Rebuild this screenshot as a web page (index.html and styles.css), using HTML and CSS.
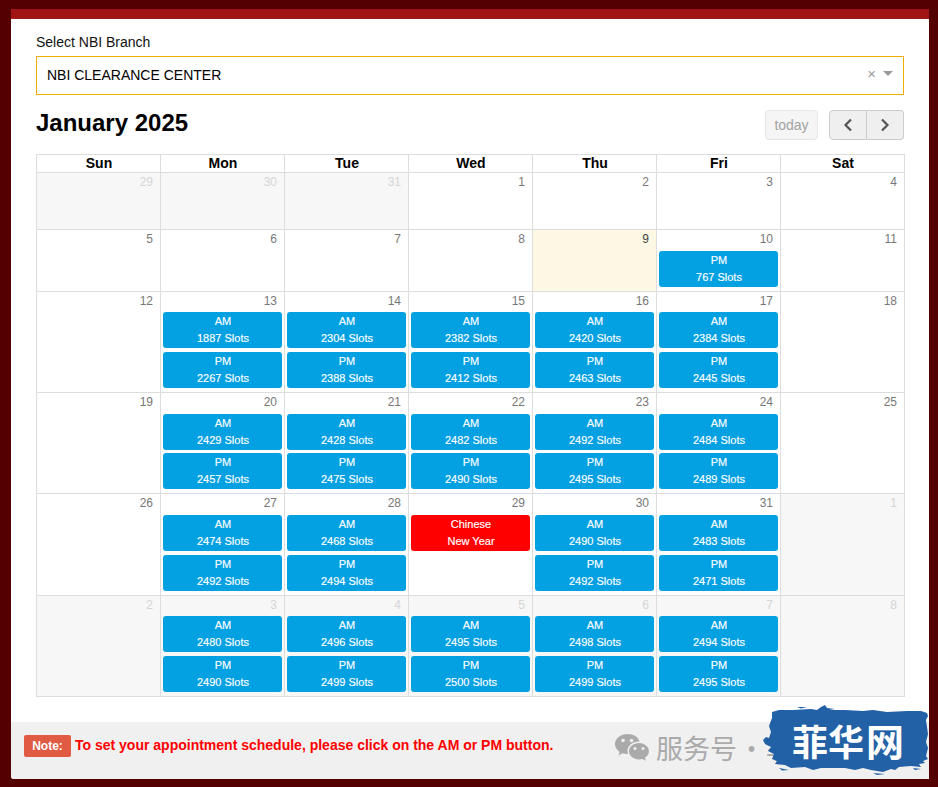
FILE: index.html
```html
<!DOCTYPE html>
<html lang="en">
<head>
<meta charset="utf-8">
<title>NBI Appointment</title>
<link rel="stylesheet" href="styles.css">
</head>
<body>
<div class="panel">
  <div class="content">
    <label class="field-label">Select NBI Branch</label>
    <div class="select">
      <span>NBI CLEARANCE CENTER</span>
      <span class="select-controls"><span class="clear">×</span><span class="caret"></span></span>
    </div>
    <div class="toolbar">
      <h2 class="title">January 2025</h2>
      <div class="actions">
        <button class="today">today</button>
        <div class="nav">
          <button class="nav-btn"><svg width="10" height="14" viewBox="0 0 10 14"><path d="M8 1.500 2.500 7 8 12.500" fill="none" stroke="#555" stroke-width="2.200"/></svg></button>
          <button class="nav-btn"><svg width="10" height="14" viewBox="0 0 10 14"><path d="M2 1.500 7.500 7 2 12.500" fill="none" stroke="#555" stroke-width="2.200"/></svg></button>
        </div>
      </div>
    </div>
    <div class="calendar">
      <div class="head"><div>Sun</div><div>Mon</div><div>Tue</div><div>Wed</div><div>Thu</div><div>Fri</div><div>Sat</div></div>
      <div class="week first">
        <div class="day off"><span class="num">29</span></div>
        <div class="day off"><span class="num">30</span></div>
        <div class="day off"><span class="num">31</span></div>
        <div class="day"><span class="num">1</span></div>
        <div class="day"><span class="num">2</span></div>
        <div class="day"><span class="num">3</span></div>
        <div class="day"><span class="num">4</span></div>
      </div>
      <div class="week second">
        <div class="day"><span class="num">5</span></div>
        <div class="day"><span class="num">6</span></div>
        <div class="day"><span class="num">7</span></div>
        <div class="day"><span class="num">8</span></div>
        <div class="day now"><span class="num">9</span></div>
        <div class="day"><span class="num">10</span><a class="ev">PM<br>767 Slots</a></div>
        <div class="day"><span class="num">11</span></div>
      </div>
      <div class="week">
        <div class="day"><span class="num">12</span></div>
        <div class="day"><span class="num">13</span><a class="ev">AM<br>1887 Slots</a><a class="ev">PM<br>2267 Slots</a></div>
        <div class="day"><span class="num">14</span><a class="ev">AM<br>2304 Slots</a><a class="ev">PM<br>2388 Slots</a></div>
        <div class="day"><span class="num">15</span><a class="ev">AM<br>2382 Slots</a><a class="ev">PM<br>2412 Slots</a></div>
        <div class="day"><span class="num">16</span><a class="ev">AM<br>2420 Slots</a><a class="ev">PM<br>2463 Slots</a></div>
        <div class="day"><span class="num">17</span><a class="ev">AM<br>2384 Slots</a><a class="ev">PM<br>2445 Slots</a></div>
        <div class="day"><span class="num">18</span></div>
      </div>
      <div class="week">
        <div class="day"><span class="num">19</span></div>
        <div class="day"><span class="num">20</span><a class="ev">AM<br>2429 Slots</a><a class="ev">PM<br>2457 Slots</a></div>
        <div class="day"><span class="num">21</span><a class="ev">AM<br>2428 Slots</a><a class="ev">PM<br>2475 Slots</a></div>
        <div class="day"><span class="num">22</span><a class="ev">AM<br>2482 Slots</a><a class="ev">PM<br>2490 Slots</a></div>
        <div class="day"><span class="num">23</span><a class="ev">AM<br>2492 Slots</a><a class="ev">PM<br>2495 Slots</a></div>
        <div class="day"><span class="num">24</span><a class="ev">AM<br>2484 Slots</a><a class="ev">PM<br>2489 Slots</a></div>
        <div class="day"><span class="num">25</span></div>
      </div>
      <div class="week">
        <div class="day"><span class="num">26</span></div>
        <div class="day"><span class="num">27</span><a class="ev">AM<br>2474 Slots</a><a class="ev">PM<br>2492 Slots</a></div>
        <div class="day"><span class="num">28</span><a class="ev">AM<br>2468 Slots</a><a class="ev">PM<br>2494 Slots</a></div>
        <div class="day"><span class="num">29</span><a class="ev holiday">Chinese<br>New Year</a></div>
        <div class="day"><span class="num">30</span><a class="ev">AM<br>2490 Slots</a><a class="ev">PM<br>2492 Slots</a></div>
        <div class="day"><span class="num">31</span><a class="ev">AM<br>2483 Slots</a><a class="ev">PM<br>2471 Slots</a></div>
        <div class="day off"><span class="num">1</span></div>
      </div>
      <div class="week">
        <div class="day off"><span class="num">2</span></div>
        <div class="day off"><span class="num">3</span><a class="ev">AM<br>2480 Slots</a><a class="ev">PM<br>2490 Slots</a></div>
        <div class="day off"><span class="num">4</span><a class="ev">AM<br>2496 Slots</a><a class="ev">PM<br>2499 Slots</a></div>
        <div class="day off"><span class="num">5</span><a class="ev">AM<br>2495 Slots</a><a class="ev">PM<br>2500 Slots</a></div>
        <div class="day off"><span class="num">6</span><a class="ev">AM<br>2498 Slots</a><a class="ev">PM<br>2499 Slots</a></div>
        <div class="day off"><span class="num">7</span><a class="ev">AM<br>2494 Slots</a><a class="ev">PM<br>2495 Slots</a></div>
        <div class="day off"><span class="num">8</span></div>
      </div>
    </div>
  </div>
  <div class="footer">
    <span class="badge">Note:</span>
    <span class="note">To set your appointment schedule, please click on the AM or PM button.</span>
    <span class="service">
      <svg class="wechat" width="36" height="30" viewBox="0 0 36 30">
        <path fill="#aaa" d="M13.500 1C6.500 1 1 5.500 1 11c0 3.200 1.800 6 4.600 7.900L4.500 22.500l4.200-2.200c1.300.4 2.800.7 4.300.7h1.100c-.4-1-.6-2-.6-3 0-5.300 5-9.500 11.200-9.500h.8C24.600 4.100 19.500 1 13.500 1z"/>
        <path fill="#aaa" d="M25 10c-5.500 0-10 3.700-10 8.200s4.500 8.200 10 8.200c1.200 0 2.300-.2 3.400-.5l3.400 1.800-.9-3c2.400-1.500 4-3.800 4-6.500C35 13.700 30.500 10 25 10z"/>
        <circle cx="9" cy="7.500" r="1.800" fill="#f0f0f0"/><circle cx="17.500" cy="7.500" r="1.800" fill="#f0f0f0"/>
        <circle cx="21" cy="15.500" r="1.500" fill="#f0f0f0"/><circle cx="29" cy="15.500" r="1.500" fill="#f0f0f0"/>
      </svg>
      <span class="service-text">服务号 · 菲</span>
    </span>
    <div class="logo">
      <svg class="brush" width="168" height="72" viewBox="0 0 168 72">
        <path fill="#2361a6" d="M9 8 16 6 30 6 48 5 54 6 58 3 62 1 64 4 72 5 66 6 82 6 100 7 110 6 124 8 144 7 158 7 164 9 165 12 163 16 165 30 163 38 165 44 163 52 165 55 160 57 162 59 156 60 158 63 148 62 136 63 132 66 128 65 120 68 108 66 100 64 92 66 82 64 72 64 58 64 50 66 42 63 28 64 22 61 12 60 14 57 9 55 11 50 5 47 8 43 2 40 0 36 3 33 6 34 8 28 6 22 9 14z"/>
        <path fill="#2361a6" d="M34 3h10l-6 1.500zM110 69l12 1-8 1zM16 64l10 2-7 .5zM150 64l8 1-6 1z"/>
      </svg>
      <span class="logo-text">菲华<span class="logo-wide">网</span></span>
    </div>
  </div>
</div>
</body>
</html>
```
FILE: styles.css
```css
* { box-sizing: border-box; }
html, body { margin: 0; height: 100%; }
body {
  background: #550000;
  padding: 9px 9px 8px 11px;
  font-family: "Liberation Sans", Arial, sans-serif;
  overflow: hidden;
}
.panel {
  height: 770px;
  background: #fff;
  border-top: 10px solid #a11414;
  border-radius: 0 0 3px 3px;
  display: flex;
  flex-direction: column;
  position: relative;
}
.content { flex: 1; padding: 15px 25px 0; }
.field-label { display: block; font-size: 14px; line-height: 16px; color: #111; margin-bottom: 6px; }
.select {
  height: 39px;
  width: 868px;
  border: 1px solid #f0ad00;
  display: flex;
  align-items: center;
  justify-content: space-between;
  padding: 0 10px 2px;
  font-size: 14px;
  color: #000;
}
.select-controls { display: flex; align-items: center; gap: 7px; margin-top: -2px; }
.clear { color: #999; font-size: 15px; line-height: 15px; }
.caret { width: 0; height: 0; border: 5px solid transparent; border-top-color: #999; border-bottom: 0; }
.toolbar { display: flex; justify-content: space-between; align-items: flex-start; width: 868px; margin-top: 15px; height: 44px; }
.title { margin: 0; font-size: 24px; line-height: 25px; font-weight: 700; color: #000; }
.actions { display: flex; gap: 11px; }
.today {
  width: 53px; height: 30px;
  background: #f5f5f5; border: 1px solid #e6e6e6; border-radius: 4px;
  color: #a3a3a3; font: 14px "Liberation Sans", Arial, sans-serif; padding: 0;
}
.nav { display: flex; }
.nav-btn {
  width: 38px; height: 30px; padding: 0;
  background: #efefef; border: 1px solid #ccc;
  display: flex; align-items: center; justify-content: center;
}
.nav-btn:first-child { border-radius: 4px 0 0 4px; }
.nav-btn:last-child { border-radius: 0 4px 4px 0; border-left: 0; width: 37px; }
.calendar { width: 869px; border-top: 1px solid #ddd; border-left: 1px solid #ddd; }
.head, .week { display: grid; grid-template-columns: repeat(7, 124px); }
.head div {
  height: 18px; border-right: 1px solid #ddd; border-bottom: 1px solid #ddd; padding-left: 1px;
  font-size: 14px; line-height: 17px; font-weight: 700; color: #000; text-align: center;
}
.week { height: 101.4px; }
.week.first { height: 57.4px; }
.week.second { height: 61.2px; }
.day {
  border-right: 1px solid #ddd; border-bottom: 1px solid #ddd;
  padding: 0 2px; display: flex; flex-direction: column; gap: 3.7px;
}
.day.off { background: #f7f7f7; }
.day.off .num { color: #d5d5d5; }
.day.now { background: #fcf8e3; }
.day.now .num { color: #444; }
.num { display: block; height: 16.9px; padding: 2px 5px 0 0; text-align: right; font-size: 12px; line-height: 14px; color: #777; }
.ev {
  display: block; height: 36px; background: #03a0e2; border-radius: 3px;
  color: #fff; font-size: 11px; line-height: 17px; text-align: center; padding: 1px 0 0 1px;
  -webkit-text-stroke: 0.15px #fff;
}
.ev.holiday { background: #f00; }
.footer {
  height: 57px; flex: none; background: #f0f0f0;
  display: flex; align-items: flex-start; padding: 13px 0 0 13px; position: relative;
  border-radius: 0 0 0 3px;
}
.badge {
  width: 47px; height: 22px; background: #e05a44; border-radius: 2px;
  color: #fff; font-size: 12px; font-weight: 700; line-height: 22px; text-align: center;
}
.note { margin-left: 4px; font-size: 14px; font-weight: 700; line-height: 20px; color: #f00; }
.service { display: flex; align-items: center; position: absolute; left: 603px; top: 11px; gap: 6px; }
.wechat { display: block; }
.service-text { font-family: "Noto Sans CJK SC", sans-serif; font-size: 27px; line-height: 30px; color: #aaa; white-space: nowrap; word-spacing: -5px; }
.logo { position: absolute; left: 752px; top: -18px; width: 168px; height: 72px; }
.brush { display: block; }
.logo-text {
  position: absolute; left: 29px; top: 14px; font-family: "Noto Sans CJK SC", sans-serif;
  font-weight: 700; font-size: 36px; line-height: 44px; color: #fff; white-space: nowrap;
}
.logo-wide { display: inline-block; font-size: 38px; line-height: 38px; margin-left: 2px; }
```
